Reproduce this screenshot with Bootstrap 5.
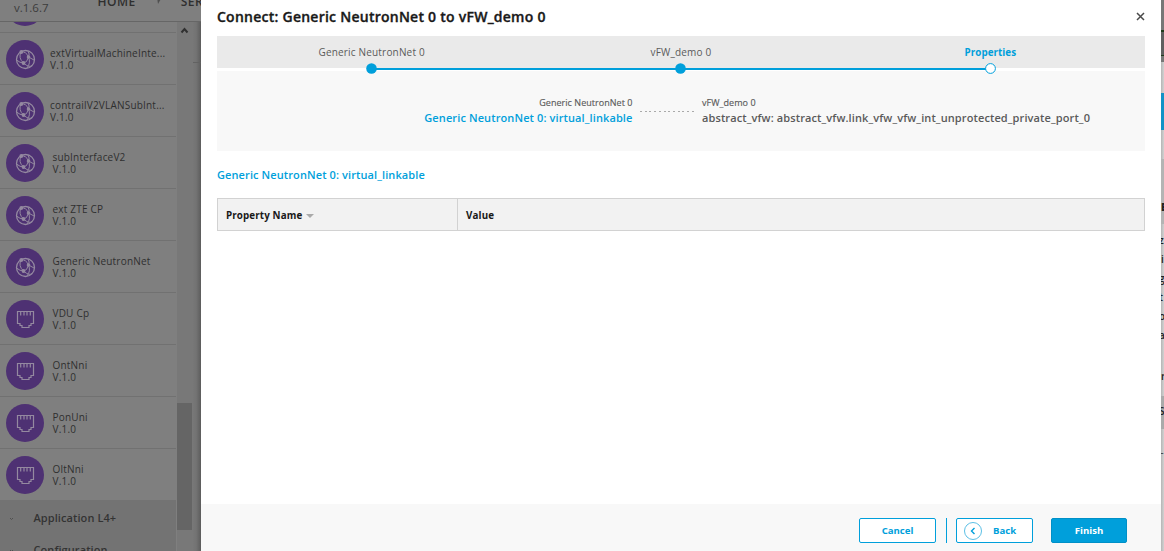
<!DOCTYPE html>
<html lang="en">
<head>
<meta charset="utf-8">
<meta name="viewport" content="width=device-width, initial-scale=1">
<title>Connect: Generic NeutronNet 0 to vFW_demo 0</title>
<link href="https://cdn.jsdelivr.net/npm/bootstrap@5.3.0/dist/css/bootstrap.min.css" rel="stylesheet">
<style>
  :root { --accent: #009fdb; }
  body { font-family: "Open Sans", sans-serif; width: 1164px; height: 551px; font-size: 11px; background: #7f7f7f; }
  .backdrop-left { width: 201px; color: #2f2f2f; }
  .topline { height: 22px; border-bottom: 1px solid #666; background: #7f7f7f; }
  .version { font-size: 11.5px; line-height: 16px; margin-left: 14px; color: #3c3c3c; width: 83.5px; flex: none; }
  .menu-word { font-size: 12px; font-weight: 600; line-height: 16px; margin-top: -6px; letter-spacing: .5px; flex: none; }
  .topline svg { flex: none; margin: -3px 19px 0 21px; }
  .palette { width: 176px; height: 529px; }
  .stub { height: 11px; border-bottom: 1px solid #717171; }
  .stub svg { margin: -34px 0 0 6px; }
  .element { height: 52px; border-bottom: 1px solid #717171; padding: 1px 0 0 6px; line-height: 12px; font-size: 10px; letter-spacing: .2px; }
  .element svg { flex: none; margin-right: 8.5px; }
  .element.long svg { margin-right: 6px; }
  .element.final { height: 51px; border: 0; padding-top: 0; }
  .category { background: #737373; height: 32px; font-size: 11px; font-weight: 600; padding: 4px 0 0 9px; color: #333; letter-spacing: .08px; }
  .category svg { width: 5px; margin-right: 19.5px; }
  .scroll-rail { width: 16px; height: 529px; background: #787878; margin-left: 1px; }
  .scroll-arrow { height: 17px; }
  .scroll-thumb { height: 127px; width: 15px; background: #656565; margin-top: 364px; }
  .canvas-edge { width: 8px; height: 529px; background: linear-gradient(90deg, #777 0, #737373 40%, #5c5c5c 100%); }
  .canvas-edge div { height: 41px; border-bottom: 1px solid #626262; }

  .wizard { width: 960px; background: #fff; }
  .wizard-title { height: 36px; padding: 0 16px; font-size: 14px; font-weight: 600; color: #191919; line-height: 34px; letter-spacing: .25px; -webkit-text-stroke: .35px #191919; }
  .wizard-content { padding: 0 16px; height: 468px; }
  .steps { height: 32px; background: #eaeaea; padding-top: 9px; line-height: 14px; font-size: 10px; color: #5a5a5a; }
  .step { width: 309.33px; text-align: center; letter-spacing: .18px; }
  .step.current { color: var(--accent); font-weight: 700; font-size: 9.8px; letter-spacing: .05px; padding-top: 1px; }
  .step svg { margin-top: 3.5px; position: relative; z-index: 1; }
  .step.current svg { margin-top: 2.5px; }
  .step-rule { height: 3px; background: #fff; position: relative; }
  .step-rule .rail { position: absolute; left: 154px; top: 0; width: 619px; height: 2px; background: var(--accent); }
  .summary { background: #f8f8f8; height: 80px; padding-top: 25px; color: #5a5a5a; }
  .summary .side { line-height: 15px; font-size: 11px; font-weight: 600; letter-spacing: .11px; }
  .summary .owner { font-size: 9px; font-weight: 400; line-height: 14px; letter-spacing: .04px; -webkit-text-stroke: .15px #5a5a5a; }
  .summary .from { width: 415.500px; }
  .summary .link-dots { width: 54px; height: 1px; margin: 15px 8px 0 7.5px; background: repeating-linear-gradient(90deg, #aaa 0 2px, transparent 2px 4.7px); }
  .accent { color: var(--accent); }
  .section-name { font-size: 11px; font-weight: 600; line-height: 15px; padding-top: 16px; height: 47px; letter-spacing: .1px; }
  .grid-head { height: 33px; border: 1px solid #d2d2d2; background: #f2f2f2; font-size: 9.8px; font-weight: 700; color: #191919; }
  .grid-head > div { padding-top: 3px; letter-spacing: .12px; }
  .grid-head .cell-name { width: 240px; border-right: 1px solid #d2d2d2; padding-left: 8px; }
  .wizard-foot { height: 47px; background: #f8f8f8; padding: 6px 34px 0 0; }
  .wizard-foot .btn { --bs-btn-border-radius: 2px; width: 77px; height: 25px; padding: 1px 0 0; font-size: 9.6px; font-weight: 700; border-color: var(--accent); color: var(--accent); background: #fff; }
  .wizard-foot .btn.solid { background: var(--accent); color: #fff; width: 76px; border-color: #0090c7; margin-left: 18px; }
  .wizard-foot .btn svg { margin: -1px 11px 0 7px; }
  .foot-rule { width: 1px; height: 25px; background: var(--accent); margin: 0 9px 0 10px; }

  .backdrop-right { width: 3px; background: linear-gradient(90deg, #b5b5b5, #d2d2d2); overflow: hidden; font-size: 10px; font-weight: 600; color: #222; }
  .backdrop-right div { flex: none; line-height: 19px; white-space: nowrap; text-indent: -2px; }
</style>
</head>
<body class="d-flex overflow-hidden">
<svg width="0" height="0" class="position-absolute">
  <symbol id="globe" viewBox="0 0 38 38">
    <circle cx="19" cy="19" r="19" fill="#4e3173"/>
    <g fill="none" stroke="#9489a0" stroke-width="1">
      <circle cx="19.5" cy="19.5" r="9" stroke-width="1.3"/>
      <path d="M15 12Q20 11 22.500 17T21 28M15 12Q12 18 17.500 23T26 25.500M10.500 20Q14 23 17.500 23T22.500 17Q24 14 22 11M22.500 17L28 20"/>
    </g>
    <g fill="#9489a0"><circle cx="15.300" cy="12" r="1.900"/><circle cx="22.500" cy="17" r="1.800"/><circle cx="17.500" cy="23" r="1.900"/></g>
  </symbol>
  <symbol id="jack" viewBox="0 0 38 38">
    <circle cx="19" cy="19" r="19" fill="#4e3173"/>
    <path d="M11.500 11.500H27.500V23.500H25V25.500H23V27.500H16V25.500H14V23.500H11.500ZM14.700 11.500V15.500M18 11.500V15.500M21 11.500V15.500M24.300 11.500V15.500" fill="none" stroke="#9489a0" stroke-width="1.200"/>
  </symbol>
</svg>

<div class="backdrop-left flex-shrink-0 overflow-hidden">
  <div class="topline d-flex">
    <div class="version">v.1.6.7</div>
    <div class="menu-word">HOME</div>
    <svg width="5" height="8" viewBox="0 0 5 8"><path d="M0 0H5L1 7Z" fill="#505050"/></svg>
    <div class="menu-word">SERVICE</div>
  </div>
  <div class="d-flex">
    <div class="palette overflow-hidden">
      <div class="stub overflow-hidden"><svg width="38" height="38" class="d-block"><use href="#globe"/></svg></div>
      <div class="element long d-flex align-items-center"><svg width="38" height="38"><use href="#globe"/></svg><div>extVirtualMachineInte...<br>V.1.0</div></div>
      <div class="element long d-flex align-items-center"><svg width="38" height="38"><use href="#globe"/></svg><div>contrailV2VLANSubInt...<br>V.1.0</div></div>
      <div class="element d-flex align-items-center"><svg width="38" height="38"><use href="#globe"/></svg><div>subInterfaceV2<br>V.1.0</div></div>
      <div class="element d-flex align-items-center"><svg width="38" height="38"><use href="#globe"/></svg><div>ext ZTE CP<br>V.1.0</div></div>
      <div class="element d-flex align-items-center"><svg width="38" height="38"><use href="#globe"/></svg><div>Generic NeutronNet<br>V.1.0</div></div>
      <div class="element d-flex align-items-center"><svg width="38" height="38"><use href="#jack"/></svg><div>VDU Cp<br>V.1.0</div></div>
      <div class="element d-flex align-items-center"><svg width="38" height="38"><use href="#jack"/></svg><div>OntNni<br>V.1.0</div></div>
      <div class="element d-flex align-items-center"><svg width="38" height="38"><use href="#jack"/></svg><div>PonUni<br>V.1.0</div></div>
      <div class="element final d-flex align-items-center"><svg width="38" height="38"><use href="#jack"/></svg><div>OltNni<br>V.1.0</div></div>
      <div class="category d-flex align-items-center"><svg viewBox="0 0 5 5" height="5"><path d="M1 2L2.500 3.500L4 2" fill="none" stroke="#505050"/></svg>Application L4+</div>
      <div class="category d-flex align-items-center"><svg viewBox="0 0 5 5" height="5"><path d="M1 2L2.500 3.500L4 2" fill="none" stroke="#505050"/></svg>Configuration</div>
    </div>
    <div class="scroll-rail">
      <div class="scroll-arrow"><svg width="15" height="17" viewBox="0 0 15 17" class="d-block"><path d="M4.500 10.500L7.500 7L10.500 10.500" fill="none" stroke="#303030" stroke-width="2"/></svg></div>
      <div class="scroll-thumb"></div>
    </div>
    <div class="canvas-edge"><div></div></div>
  </div>
</div>

<main class="wizard flex-shrink-0">
  <header class="wizard-title d-flex justify-content-between">
    <span>Connect: Generic NeutronNet 0 to vFW_demo 0</span>
    <svg class="mt-2 pt-1" width="9" height="13" viewBox="0 0 9 9"><path d="M1 1L8 8M8 1L1 8" stroke="#4a4a4a" stroke-width="1.500"/></svg>
  </header>
  <div class="wizard-content">
    <div class="steps d-flex">
      <div class="step">Generic NeutronNet 0<svg class="d-block mx-auto" width="11" height="11"><circle cx="5.500" cy="5.500" r="5.300" fill="#009fdb"/></svg></div>
      <div class="step">vFW_demo 0<svg class="d-block mx-auto" width="11" height="11"><circle cx="5.500" cy="5.500" r="5.300" fill="#009fdb"/></svg></div>
      <div class="step current">Properties<svg class="d-block mx-auto" width="11" height="11"><circle cx="5.500" cy="5.500" r="4.900" fill="#fff" stroke="#009fdb"/></svg></div>
    </div>
    <div class="step-rule"><div class="rail"></div></div>
    <div class="summary d-flex">
      <div class="side from text-end"><div class="owner">Generic NeutronNet 0</div><div class="accent">Generic NeutronNet 0: virtual_linkable</div></div>
      <div class="link-dots"></div>
      <div class="side"><div class="owner">vFW_demo 0</div><div>abstract_vfw: abstract_vfw.link_vfw_vfw_int_unprotected_private_port_0</div></div>
    </div>
    <div class="section-name accent">Generic NeutronNet 0: virtual_linkable</div>
    <div class="grid-head d-flex">
      <div class="cell-name d-flex align-items-center">Property Name<svg class="ms-1" width="8" height="4" viewBox="0 0 8 4"><path d="M0 0H8L4 4Z" fill="#aaa"/></svg></div>
      <div class="d-flex align-items-center ps-2">Value</div>
    </div>
  </div>
  <footer class="wizard-foot d-flex align-items-center justify-content-end">
    <button type="button" class="btn">Cancel</button>
    <div class="foot-rule"></div>
    <button type="button" class="btn d-flex align-items-center"><svg width="18" height="18" viewBox="0 0 18 18"><circle cx="9" cy="9" r="8.500" fill="none" stroke="#5bbfe5"/><path d="M10.500 6L7.500 9L10.500 12" fill="none" stroke="#009fdb" stroke-width="1.400"/></svg>Back</button>
    <button type="button" class="btn solid">Finish</button>
  </footer>
</main>

<aside class="backdrop-right d-flex flex-column">
  <div style="height:62px;background:linear-gradient(#777 30px,#203c1b 30px,#203c1b 32px,#606060 32px,#606060 55px,#203c1b 55px,#203c1b 56px,#777 56px)"></div>
  <div style="height:31px"></div>
  <div style="height:37px;background:#1292c6"></div>
  <div style="height:29px"></div>
  <div style="height:65px;background:#b4b4b4;padding-top:39px;text-indent:0"><b>E</b></div>
  <div style="height:7px"></div>
  <div>z</div><div style="text-indent:0">i</div><div>g</div><div>t</div><div>o</div><div>a</div>
  <div style="height:22px"></div>
  <div style="text-indent:0">r</div>
  <div style="height:10px"></div>
  <div style="height:33px;background:#aaa;padding-top:6px">S</div>
  <div style="height:10px"></div>
  <div>_</div>
</aside>
<script src="https://cdn.jsdelivr.net/npm/bootstrap@5.3.0/dist/js/bootstrap.bundle.min.js"></script>
</body>
</html>
